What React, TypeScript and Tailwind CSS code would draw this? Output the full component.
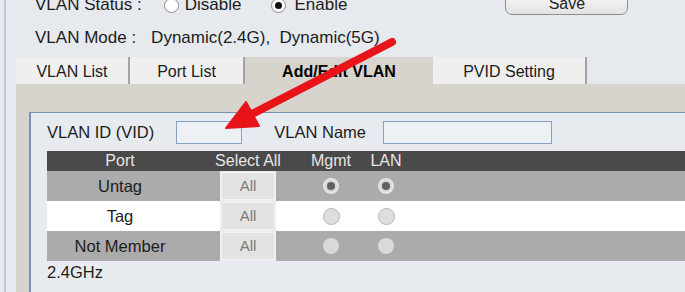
import React from "react";

type RadioKind = "checked" | "empty" | "disabled";

const rows: { label: string; bg: string; radio: RadioKind }[] = [
  { label: "Untag", bg: "bg-[#ababab]", radio: "checked" },
  { label: "Tag", bg: "bg-white", radio: "empty" },
  { label: "Not Member", bg: "bg-[#ababab]", radio: "disabled" },
];

function TableRadio({ kind }: { kind: RadioKind }) {
  if (kind === "checked") {
    return (
      <span className="flex h-[16px] w-[16px] items-center justify-center rounded-full border-2 border-[#e4e4e4] bg-[#d6d6d6]">
        <span className="h-[8px] w-[8px] rounded-full bg-[#606060]" />
      </span>
    );
  }
  if (kind === "empty") {
    return <span className="h-[17px] w-[17px] rounded-full border border-[#b4b4b4] bg-[#dedede]" />;
  }
  return <span className="h-[16px] w-[16px] rounded-full bg-[#d9d9d9]" />;
}

function TopRadio({ checked }: { checked?: boolean }) {
  return (
    <span className="flex h-[15px] w-[15px] items-center justify-center rounded-full border border-[#8c8c8c] bg-white">
      {checked && <span className="h-[7px] w-[7px] rounded-full bg-[#111]" />}
    </span>
  );
}

export default function App() {
  const tabs = [
    { name: "VLAN List", w: "w-[114px]" },
    { name: "Port List", w: "w-[115px]" },
    { name: "Add/Edit VLAN", w: "w-[188px]", active: true },
    { name: "PVID Setting", w: "w-[154px]" },
  ];

  return (
    <div
      className="relative h-[292px] w-[685px] overflow-hidden bg-[#e6e9ed] text-[#1c1c1c]"
      style={{ fontFamily: '"Liberation Sans", Arial, sans-serif' }}
    >
      <div className="flex h-full pl-[4px]">
        <div className="h-full w-[2px] bg-[#b8cbdd]" />
        <div className="flex h-full flex-1 flex-col pl-[10px]">
          {/* status row */}
          <div className="mt-[-7px] flex h-[24px] items-center whitespace-nowrap pl-[19px] text-[17px]">
            <span>VLAN Status :</span>
            <span className="ml-[22px]">
              <TopRadio />
            </span>
            <span className="ml-[6px]">Disable</span>
            <span className="ml-[30px]">
              <TopRadio checked />
            </span>
            <span className="ml-[8px]">Enable</span>
            <button className="ml-[158px] mt-[-2px] h-[24px] w-[123px] self-start rounded-[7px] border border-[#8e8e8e] bg-gradient-to-b from-[#fbfbfb] to-[#e2e2e2] text-[16px] text-[#222]">
              Save
            </button>
          </div>

          {/* mode row */}
          <div className="mt-[10px] flex h-[22px] items-center whitespace-nowrap pl-[19px] text-[17px]">
            <span>VLAN Mode :</span>
            <span className="ml-[15px]">Dynamic(2.4G),&nbsp; Dynamic(5G)</span>
          </div>

          {/* tabs */}
          <div className="mt-[8px] flex h-[27px] text-[16px]">
            {tabs.map((t) => (
              <div
                key={t.name}
                className={
                  t.active
                    ? `${t.w} flex items-center justify-center bg-[#d7d4ce] pt-[3px] font-bold text-black`
                    : `${t.w} flex items-center justify-center border-r-2 border-[#a3a3a3] bg-[#efefef] pt-[3px]`
                }
              >
                {t.name}
              </div>
            ))}
          </div>

          {/* panel */}
          <div className="flex flex-1 flex-col bg-[#d7d4ce] pl-[13px] pt-[28px]">
            <div className="flex flex-1 flex-col border-l-2 border-t border-[#7892ad] bg-[#e7ebef] pl-[16px]">
              <div className="mt-[8px] flex h-[23px] items-center whitespace-nowrap text-[16.5px]">
                <span>VLAN ID (VID)</span>
                <span className="ml-[22px] h-[23px] w-[66px] border border-[#84a3c4] bg-[#eef1f4]" />
                <span className="ml-[32px]">VLAN Name</span>
                <span className="ml-[17px] h-[23px] w-[169px] border border-[#84a3c4] bg-[#eef1f4]" />
              </div>

              <div className="mt-[7px] flex flex-col whitespace-nowrap text-[16.5px]">
                <div className="flex h-[20px] items-center bg-[#4a4a4a] text-[16px] text-[#e6e6e6]">
                  <div className="w-[173px] pr-[27px] text-center">Port</div>
                  <div className="flex w-[56px] justify-center">Select All</div>
                  <div className="ml-[35px] w-[40px] text-center">Mgmt</div>
                  <div className="ml-[15px] w-[40px] text-center">LAN</div>
                </div>
                {rows.map((r) => (
                  <div key={r.label} className={`flex h-[30px] items-stretch ${r.bg}`}>
                    <div className="flex w-[173px] items-center justify-center pr-[27px]">{r.label}</div>
                    <div className="flex w-[56px] items-stretch bg-[#ececec] p-[1px]">
                      <div className="flex flex-1 items-center justify-center border border-[#f3f3f3] bg-[#e3e3e3] text-[15px] text-[#7a7a7a]">
                        All
                      </div>
                    </div>
                    <div className="ml-[35px] flex w-[40px] items-center justify-center">
                      <TableRadio kind={r.radio} />
                    </div>
                    <div className="ml-[15px] flex w-[40px] items-center justify-center">
                      <TableRadio kind={r.radio} />
                    </div>
                  </div>
                ))}
                <div className="flex h-[22px] items-center">2.4GHz</div>
              </div>
            </div>
          </div>
        </div>
      </div>

      {/* red arrow drawn over the screenshot */}
      <svg className="pointer-events-none absolute left-0 top-0" width="685" height="292" viewBox="0 0 685 292">
        <line x1="392" y1="42" x2="250" y2="115" stroke="#e8141a" strokeWidth="8" strokeLinecap="round" />
        <polygon points="226,128 259,126 246,102" fill="#e8141a" stroke="#e8141a" strokeWidth="2" strokeLinejoin="round" />
      </svg>
    </div>
  );
}
